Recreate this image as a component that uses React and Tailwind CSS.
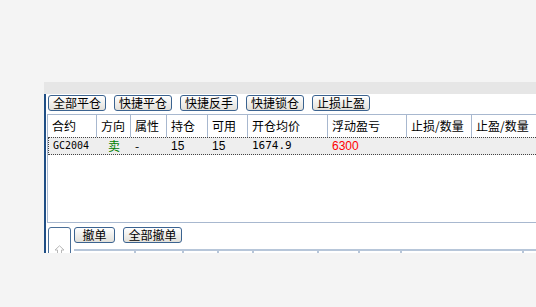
const font = { fontFamily: '"Noto Sans CJK SC", "Liberation Sans", sans-serif' }

const topButtons = ['全部平仓', '快捷平仓', '快捷反手', '快捷锁仓', '止损止盈']

const columns = [
  { label: '合约', w: 'w-[49px]' },
  { label: '方向', w: 'w-[34px]' },
  { label: '属性', w: 'w-[36px]' },
  { label: '持仓', w: 'w-[41px]' },
  { label: '可用', w: 'w-[40px]' },
  { label: '开仓均价', w: 'w-[80px]' },
  { label: '浮动盈亏', w: 'w-[79px]' },
  { label: '止损/数量', w: 'w-[65px]' },
  { label: '止盈/数量', w: 'w-[90px]' },
]

const orderCols = ['w-[62px]', 'w-[48px]', 'w-[35px]', 'w-[35px]', 'w-[65px]', 'w-[41px]', 'w-[42px]', 'w-[122px]', 'w-[40px]']

function Btn({ children, w }) {
  return (
    <button
      type="button"
      className={`${w} h-[16px] shrink-0 rounded-[3px] border border-[#3b6390] bg-gradient-to-b from-white to-[#e2e0da] text-[12px] leading-[14px] text-black`}
    >
      {children}
    </button>
  )
}

export default function App() {
  return (
    <div className="h-[307px] w-[536px] overflow-hidden bg-[#f4f4f4] pl-[44px] pt-[82px]" style={font}>
      <div className="h-[12px] bg-[#e6e6e6]" />
      <div className="h-[159px] overflow-hidden border-l-2 border-[#1f4e85] bg-white">
        <div className="flex gap-[8px] pl-[2px] pt-[1px]">
          {topButtons.map((b) => (
            <Btn key={b} w="w-[58px]">{b}</Btn>
          ))}
        </div>

        <div className="ml-[1px] mt-[3px] h-[109px] border-b border-l border-t border-[#a8b8cf]">
          <div className="flex h-[22px] items-center text-[12px] text-black">
            {columns.map((c) => (
              <div key={c.label} className={`${c.w} h-full shrink-0 border-r border-[#a8b8cf] pl-[4px] leading-[22px]`}>
                {c.label}
              </div>
            ))}
          </div>
          <div className="flex h-[18px] items-center border-y border-l border-dotted border-[#444] bg-[#eeeeee] text-[12px] leading-[16px]">
            <div className="w-[48px] shrink-0 pl-[4px] text-[10px]" style={{ fontFamily: '"DejaVu Sans Mono", monospace' }}>GC2004</div>
            <div className="w-[34px] shrink-0 text-center text-[#008000]">卖</div>
            <div className="w-[36px] shrink-0 pl-[4px]">-</div>
            <div className="w-[41px] shrink-0 pl-[4px]" style={{ fontFamily: '"Liberation Sans", sans-serif' }}>15</div>
            <div className="w-[40px] shrink-0 pl-[4px]" style={{ fontFamily: '"Liberation Sans", sans-serif' }}>15</div>
            <div className="w-[80px] shrink-0 pl-[4px] text-[11px]" style={{ fontFamily: '"DejaVu Sans Mono", monospace' }}>1674.9</div>
            <div className="w-[79px] shrink-0 pl-[4px] text-[#ff0000]" style={{ fontFamily: '"Liberation Sans", sans-serif' }}>6300</div>
          </div>
        </div>

        <div className="flex pl-[2px] pt-[4px]">
          <div className="flex h-[40px] w-[23px] shrink-0 justify-center rounded-t-[3px] border border-[#4a6f98] pt-[17px]">
            <svg width="11" height="9" viewBox="0 0 11 9" fill="none" stroke="#b8b8b8" strokeWidth="1">
              <path d="M5.5 0.8 L10 5 H7.5 V8.5 H3.5 V5 H1 Z" />
            </svg>
          </div>
          <div className="flex-1 pl-[3px]">
            <div className="flex gap-[8px]">
              <Btn w="w-[41px]">撤单</Btn>
              <Btn w="w-[59px]">全部撤单</Btn>
            </div>
            <div className="mt-[6px] flex h-[10px] border-t-2 border-[#b7c6d9]">
              {orderCols.map((w, i) => (
                <div key={i} className={`${w} shrink-0 border-r-2 border-[#b7c6d9]`} />
              ))}
            </div>
          </div>
        </div>
      </div>
    </div>
  )
}
